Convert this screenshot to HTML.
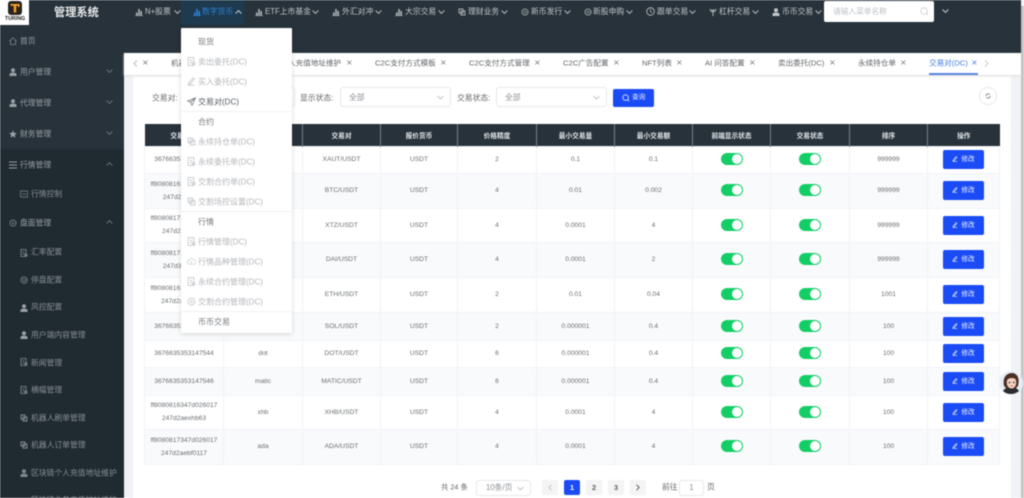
<!DOCTYPE html>
<html lang="zh"><head><meta charset="utf-8"><title>管理系统</title>
<style>
*{box-sizing:border-box;margin:0;padding:0}
html,body{width:1024px;height:498px;overflow:hidden;background:#fff}
body{font-family:"Liberation Sans","Noto Sans CJK SC",sans-serif;position:relative;color:#606266}
#w{position:absolute;inset:0;filter:blur(.4px);overflow:hidden}
.a{position:absolute;white-space:nowrap}
.l{transform:translateY(.6px)}
.n{position:absolute;top:7px;font-size:7.8px;line-height:10px;color:#c4c8cb;white-space:nowrap}
.nc{position:absolute;top:9px;width:7px;height:6px}
.ni{position:absolute;top:8px;width:8px;height:8px}
.s{position:absolute;font-size:7.8px;line-height:12px;color:#9aa0a4;white-space:nowrap;transform:translateY(.6px)}
.si{position:absolute;width:8px;height:8px}
.t{position:absolute;top:57px;font-size:7.6px;line-height:12px;color:#5f6468;white-space:nowrap;transform:translateY(.5px)}
.x{position:absolute;top:57px;font-size:8px;line-height:11px;color:#777;font-family:"DejaVu Sans",sans-serif}
.d{position:absolute;left:198px;font-size:8px;line-height:12px;color:#b4b6ba;white-space:nowrap;transform:translateY(.7px)}
.d.h{color:#777b80}.d.k{color:#555a60}
.di{position:absolute;left:187px;width:9px;height:9px}
.hr{position:absolute;left:181px;width:111px;height:1px;background:#f1f2f4}
table{position:absolute;left:144px;top:124px;width:855px;table-layout:fixed;border-collapse:collapse;font-size:6.7px;color:#6a6e73;text-align:center}
th{background:#27323a;color:#e4e7e9;font-weight:bold;height:22px;border-left:1px solid #77808a;font-size:6.7px}
th:first-child{border-left:0}
td{border:1px solid #f1f3f7;line-height:13px;padding:0}
tr.g td{background:#f9fafb}
.sw{display:inline-block;position:relative;width:22px;height:12px;border-radius:6px;background:#13ce66;vertical-align:middle}
.sw:after{content:"";position:absolute;right:1px;top:1px;width:10px;height:10px;border-radius:50%;background:#fff}
.b{display:inline-block;width:41px;height:19px;line-height:19px;background:#1a4bf5;border-radius:2px;color:#e8edff;font-size:6.7px;vertical-align:middle}
.b svg{width:6px;height:6px;margin-right:3px;vertical-align:-1px}
.sel{position:absolute;height:20px;background:#fff;border:1px solid #e6e8ec;border-radius:3px;font-size:7.8px;line-height:19px;color:#8a8e94;padding-left:8px}
.sel svg{position:absolute;right:6px;top:7px;width:7px;height:5px}
.p{position:absolute;top:480px;width:16px;height:15px;line-height:15px;text-align:center;font-size:7.4px;background:#f4f4f5;color:#606266;border-radius:2px;font-weight:bold}
.p svg{position:absolute;left:6px;top:4px}
</style></head><body><div id="w">
<svg width="0" height="0" style="position:absolute"><defs>
<symbol id="ch" viewBox="0 0 7 5"><path d="M.6 1 3.500 3.900 6.400 1" fill="none" stroke="currentColor"/></symbol>
<symbol id="up" viewBox="0 0 7 5"><path d="M.6 4 3.500 1.100 6.400 4" fill="none" stroke="currentColor"/></symbol>
<symbol id="bar" viewBox="0 0 8 8"><path d="M0 7.500h8V8H0zM1 4.500h1.600v3H1zM3.200 1h1.600v6.500H3.200zM5.400 3H7v4.500H5.400z" fill="currentColor"/></symbol>
<symbol id="gear" viewBox="0 0 8 8"><circle cx="4" cy="4" r="3" fill="none" stroke="currentColor" stroke-width="1.200" stroke-dasharray="1.200 .5"/><circle cx="4" cy="4" r="1" fill="none" stroke="currentColor" stroke-width=".6"/></symbol>
<symbol id="user" viewBox="0 0 8 8"><circle cx="4" cy="2.200" r="2" fill="currentColor"/><path d="M.5 8V6.200C.5 5 2 4.600 4 4.600s3.500.4 3.500 1.600V8z" fill="currentColor"/></symbol>
<symbol id="doc" viewBox="0 0 8 8"><path d="M1 .5h5v7H1zM2.500 3h2M2.500 5h2" fill="none" stroke="currentColor" stroke-width=".8"/><circle cx="6" cy="6" r="1.200" fill="none" stroke="currentColor" stroke-width=".7"/></symbol>
<symbol id="edit" viewBox="0 0 8 8"><path d="M1 7.300h6M1.500 5.500 5.500.8l1.200 1-4 4.700-1.500.3z" fill="none" stroke="currentColor" stroke-width=".8"/></symbol>
<symbol id="cop" viewBox="0 0 8 8"><path d="M1 1h4v4H1zM3 3h4v4H3z" fill="none" stroke="currentColor" stroke-width=".9"/></symbol>
</defs></svg>

<!-- base regions -->
<div class="a" style="left:0;top:0;width:1021px;height:53px;background:#27323a"></div>
<div class="a" style="left:0;top:53px;width:124px;height:445px;background:#27323a"></div>
<div class="a" style="left:0;top:149px;width:124px;height:349px;background:#1f2a31"></div>
<div class="a" style="left:124px;top:53px;width:897px;height:445px;background:#f0f2f5"></div>
<div class="a" style="left:133px;top:76px;width:878px;height:422px;background:#fff"></div>
<div class="a" style="left:124px;top:53px;width:897px;height:22px;background:#fff;box-shadow:0 1px 2px #ddd"></div>
<div class="a" style="left:1021px;top:0;width:3px;height:498px;background:#c4c4c4"></div>
<div class="a" style="left:1021px;top:0;width:3px;height:6px;background:#f1f1f1"></div>

<!-- logo -->
<div class="a" style="left:0;top:0;width:29px;height:25px;background:#fff"></div>
<div class="a" style="left:8px;top:1px;width:14px;height:14px;border-radius:3px;background:#2a2320"></div>
<svg class="a" style="left:9px;top:2px" width="12" height="12" viewBox="0 0 12 12"><path d="M1.500 2h9v3H9V3.800H7.200V10.500H4.800V3.800H1.500z" fill="#f5a623"/></svg>
<div class="a" style="left:2px;top:16px;width:26px;text-align:center;font-size:5.300px;line-height:7px;font-weight:bold;color:#222">TURING</div>
<div class="a" style="left:54px;top:6px;font-size:11.200px;line-height:14px;font-weight:bold;color:#e9ebec">管理系统</div>

<!-- top nav -->
<div class="a" style="left:181px;top:0;width:63px;height:25px;background:#1d3a4e"></div>
<svg class="ni" style="left:135px;color:#aeb3b6"><use href="#bar"/></svg><div class="n" style="left:145px">N+股票</div><svg class="nc" style="left:174px;color:#b5b9bc"><use href="#ch"/></svg>
<svg class="ni" style="left:193px;color:#2f80d6"><use href="#bar"/></svg><div class="n" style="left:202px;color:#2f80d6">数字货币</div><svg class="nc" style="left:235px;color:#c8ccd0"><use href="#up"/></svg>
<svg class="ni" style="left:255px;color:#aeb3b6"><use href="#bar"/></svg><div class="n" style="left:265px">ETF上市基金</div><svg class="nc" style="left:312px;color:#b5b9bc"><use href="#ch"/></svg>
<svg class="ni" style="left:332px;color:#aeb3b6"><use href="#bar"/></svg><div class="n" style="left:342px">外汇对冲</div><svg class="nc" style="left:375px;color:#b5b9bc"><use href="#ch"/></svg>
<svg class="ni" style="left:395px;color:#aeb3b6"><use href="#bar"/></svg><div class="n" style="left:405px">大宗交易</div><svg class="nc" style="left:438px;color:#b5b9bc"><use href="#ch"/></svg>
<svg class="ni" style="left:458px;color:#aeb3b6"><use href="#cop"/></svg><div class="n" style="left:468px">理财业务</div><svg class="nc" style="left:501px;color:#b5b9bc"><use href="#ch"/></svg>
<svg class="ni" style="left:521px;color:#aeb3b6"><use href="#gear"/></svg><div class="n" style="left:531px">新币发行</div><svg class="nc" style="left:564px;color:#b5b9bc"><use href="#ch"/></svg>
<svg class="ni" style="left:584px;color:#aeb3b6"><use href="#gear"/></svg><div class="n" style="left:593px">新股申购</div><svg class="nc" style="left:626px;color:#b5b9bc"><use href="#ch"/></svg>
<svg class="ni" style="left:646px;top:7px;width:9px;height:9px" viewBox="0 0 9 9"><circle cx="4.500" cy="4.500" r="3.800" fill="none" stroke="#c0c4c7" stroke-width=".8"/><path d="M4.500 2v2.700l1.600 1" fill="none" stroke="#c0c4c7" stroke-width=".7"/></svg><div class="n" style="left:657px">跟单交易</div><svg class="nc" style="left:689px;color:#b5b9bc"><use href="#ch"/></svg>
<svg class="ni" style="left:709px;color:#aeb3b6" viewBox="0 0 8 8"><path d="M.5 1.500c2 1 5 1 7 0M1.500 3.500h5M4 1.500V8" fill="none" stroke="currentColor" stroke-width="1"/></svg><div class="n" style="left:719px">杠杆交易</div><svg class="nc" style="left:752px;color:#b5b9bc"><use href="#ch"/></svg>
<svg class="ni" style="left:772px;color:#c4c8cb"><use href="#user"/></svg><div class="n" style="left:782px">币币交易</div><svg class="nc" style="left:815px;color:#b5b9bc"><use href="#ch"/></svg>
<div class="a" style="left:824px;top:1px;width:110px;height:21px;background:#fff;border-radius:2px"></div>
<div class="a" style="left:833px;top:6px;font-size:7.700px;line-height:11px;color:#bcc0c5">请输入菜单名称</div>
<svg class="a" style="left:920px;top:7px" width="9" height="9" viewBox="0 0 9 9"><circle cx="4" cy="4" r="3.200" fill="none" stroke="#ccc" stroke-width=".8"/><path d="M6.300 6.300 8 8" stroke="#ccc" stroke-width=".8"/></svg>
<svg class="nc" style="left:942px;top:8px;color:#c5c9cc"><use href="#ch"/></svg>

<!-- sidebar -->
<svg class="si" style="left:9px;top:37px;color:#7f878c" viewBox="0 0 8 8"><path d="M.5 4 4 .8 7.500 4M1.500 3.500V7.500h5V3.500" fill="none" stroke="currentColor" stroke-width=".8"/></svg><div class="s" style="left:20px;top:35px">首页</div>
<svg class="si" style="left:9px;top:68px;color:#9aa0a4"><use href="#user"/></svg><div class="s" style="left:20px;top:66px">用户管理</div><svg class="nc" style="left:106px;top:68px;color:#667076"><use href="#ch"/></svg>
<svg class="si" style="left:9px;top:99px;color:#9aa0a4"><use href="#user"/></svg><div class="s" style="left:20px;top:97px">代理管理</div><svg class="nc" style="left:106px;top:99px;color:#667076"><use href="#ch"/></svg>
<svg class="si" style="left:9px;top:130px;color:#9aa0a4" viewBox="0 0 8 8"><path d="M4 .3 5.100 2.900 7.800 3.100 5.800 5 6.400 7.700 4 6.300 1.600 7.700 2.200 5 .2 3.100 2.900 2.900z" fill="currentColor"/></svg><div class="s" style="left:20px;top:128px">财务管理</div><svg class="nc" style="left:106px;top:130px;color:#667076"><use href="#ch"/></svg>
<svg class="si" style="left:9px;top:161px;color:#9aa0a4" viewBox="0 0 8 8"><path d="M0 1h8M0 4h8M0 7h8" stroke="currentColor"/></svg><div class="s" style="left:20px;top:159px">行情管理</div><svg class="nc" style="left:106px;top:161px;color:#667076"><use href="#up"/></svg>
<svg class="si" style="left:20px;top:190px;color:#7f878c" viewBox="0 0 8 8"><path d="M.5 1h7v6h-7zM2 4h4" fill="none" stroke="currentColor" stroke-width=".7"/></svg><div class="s" style="left:31px;top:188px;color:#8a9095">行情控制</div>
<svg class="si" style="left:9px;top:219px;color:#7f878c"><use href="#gear"/></svg><div class="s" style="left:20px;top:217px">盘面管理</div><svg class="nc" style="left:106px;top:219px;color:#667076"><use href="#up"/></svg>
<svg class="si" style="left:20px;top:249px;color:#8a9095"><use href="#doc"/></svg><div class="s" style="left:31px;top:246px;color:#8a9095">汇率配置</div>
<svg class="si" style="left:20px;top:276px;color:#8a9095"><use href="#gear"/></svg><div class="s" style="left:31px;top:274px;color:#8a9095">停盘配置</div>
<svg class="si" style="left:20px;top:304px;color:#9aa0a4"><use href="#user"/></svg><div class="s" style="left:31px;top:301px;color:#8a9095">风控配置</div>
<svg class="si" style="left:20px;top:331px;color:#9aa0a4"><use href="#user"/></svg><div class="s" style="left:31px;top:329px;color:#8a9095">用户端内容管理</div>
<svg class="si" style="left:20px;top:358px;color:#8a9095"><use href="#doc"/></svg><div class="s" style="left:31px;top:357px;color:#8a9095">新闻管理</div>
<svg class="si" style="left:20px;top:386px;color:#8a9095"><use href="#doc"/></svg><div class="s" style="left:31px;top:384px;color:#8a9095">横幅管理</div>
<svg class="si" style="left:20px;top:414px;color:#8a9095"><use href="#cop"/></svg><div class="s" style="left:31px;top:412px;color:#8a9095">机器人刷单管理</div>
<svg class="si" style="left:20px;top:441px;color:#8a9095"><use href="#cop"/></svg><div class="s" style="left:31px;top:439px;color:#8a9095">机器人订单管理</div>
<svg class="si" style="left:20px;top:469px;color:#7f878c"><use href="#user"/></svg><div class="s" style="left:31px;top:467px;color:#8a9095">区块链个人充值地址维护</div>
<div class="s" style="left:31px;top:494px;color:#8a9095">区块链业务充值地址维护</div>

<!-- tabs -->
<svg class="a" style="left:133px;top:60px;color:#aaa" width="5" height="7" viewBox="0 0 5 7"><path d="M4 .5 1 3.500 4 6.500" fill="none" stroke="currentColor" stroke-width=".8"/></svg>
<div class="x" style="left:142px">×</div>
<div class="t" style="left:171px">机器人充值</div>
<div class="t" style="left:288px">人充值地址维护</div><div class="x" style="left:346px">×</div>
<div class="t" style="left:375px">C2C支付方式模板</div><div class="x" style="left:440px">×</div>
<div class="t" style="left:469px">C2C支付方式管理</div><div class="x" style="left:534px">×</div>
<div class="t" style="left:563px">C2C广告配置</div><div class="x" style="left:613px">×</div>
<div class="t" style="left:642px">NFT列表</div><div class="x" style="left:676px">×</div>
<div class="t" style="left:705px">AI 问答配置</div><div class="x" style="left:749px">×</div>
<div class="t" style="left:778px">卖出委托(DC)</div><div class="x" style="left:829px">×</div>
<div class="t" style="left:858px">永续持仓单</div><div class="x" style="left:900px">×</div>
<div class="t" style="left:929px;color:#3f7be0">交易对(DC)</div><div class="x" style="left:971px;color:#3f7be0">×</div>
<div class="a" style="left:929px;top:73px;width:49px;height:2px;background:#5a85e0"></div>
<svg class="a" style="left:984px;top:60px;color:#bbb" width="5" height="7" viewBox="0 0 5 7"><path d="M1 .5 4 3.500 1 6.500" fill="none" stroke="currentColor" stroke-width=".8"/></svg>

<!-- filters -->
<div class="a l" style="left:152px;top:92px;font-size:7.800px;line-height:12px;color:#666">交易对:</div>
<div class="sel" style="left:181px;top:87px;width:114px"></div>
<div class="a l" style="left:300px;top:92px;font-size:7.800px;line-height:12px;color:#666">显示状态:</div>
<div class="sel" style="left:340px;top:87px;width:111px">全部<svg style="color:#c0c4cc"><use href="#ch"/></svg></div>
<div class="a l" style="left:457px;top:92px;font-size:7.800px;line-height:12px;color:#666">交易状态:</div>
<div class="sel" style="left:496px;top:87px;width:111px">全部<svg style="color:#c0c4cc"><use href="#ch"/></svg></div>
<div class="a" style="left:613px;top:89px;width:41px;height:18px;background:#1a4bf5;border-radius:2px;color:#e8edff;font-size:6.700px;line-height:18px;padding-left:19px">查询</div>
<svg class="a" style="left:622px;top:94px" width="8" height="8" viewBox="0 0 8 8"><circle cx="3.600" cy="3.600" r="2.800" fill="none" stroke="#e8edff" stroke-width=".8"/><path d="M5.600 5.600 7.300 7.300" stroke="#e8edff" stroke-width=".8"/></svg>
<div class="a" style="left:979px;top:87px;width:18px;height:18px;border:1px solid #e6e8ec;border-radius:50%"></div>
<svg class="a" style="left:985px;top:93px" width="6" height="6" viewBox="0 0 6 6"><path d="M.8 3a2.200 2.200 0 0 1 4-1.200M5.200 3a2.200 2.200 0 0 1-4 1.200" fill="none" stroke="#777" stroke-width=".8"/></svg>

<!-- table -->
<table>
<colgroup><col style="width:79px"><col style="width:79px"><col style="width:78px"><col style="width:77px"><col style="width:79px"><col style="width:78px"><col style="width:78px"><col style="width:78px"><col style="width:79px"><col style="width:78px"><col style="width:72px"></colgroup>
<tr><th>交易对ID</th><th>币种</th><th>交易对</th><th>报价货币</th><th>价格精度</th><th>最小交易量</th><th>最小交易额</th><th>前端显示状态</th><th>交易状态</th><th>排序</th><th>操作</th></tr>
<tr style="height:27px"><td>3676635353147541</td><td>xaut</td><td>XAUT/USDT</td><td>USDT</td><td>2</td><td>0.1</td><td>0.1</td><td><i class="sw"></i></td><td><i class="sw"></i></td><td>999999</td><td><span class="b"><svg><use href="#edit"/></svg>修改</span></td></tr>
<tr class="g" style="height:35px"><td>ff8080816347d026017<br>247d2aebtc01</td><td>btc</td><td>BTC/USDT</td><td>USDT</td><td>4</td><td>0.01</td><td>0.002</td><td><i class="sw"></i></td><td><i class="sw"></i></td><td>999999</td><td><span class="b"><svg><use href="#edit"/></svg>修改</span></td></tr>
<tr style="height:34px"><td>ff8080817347d026017<br>247d2aexz012</td><td>xtz</td><td>XTZ/USDT</td><td>USDT</td><td>4</td><td>0.0001</td><td>4</td><td><i class="sw"></i></td><td><i class="sw"></i></td><td>999999</td><td><span class="b"><svg><use href="#edit"/></svg>修改</span></td></tr>
<tr class="g" style="height:35px"><td>ff8080817347d026017<br>247d3adai013</td><td>dai</td><td>DAI/USDT</td><td>USDT</td><td>4</td><td>0.0001</td><td>2</td><td><i class="sw"></i></td><td><i class="sw"></i></td><td>999999</td><td><span class="b"><svg><use href="#edit"/></svg>修改</span></td></tr>
<tr style="height:35px"><td>ff8080816347d026017<br>247d2aeth0117</td><td>eth</td><td>ETH/USDT</td><td>USDT</td><td>2</td><td>0.01</td><td>0.04</td><td><i class="sw"></i></td><td><i class="sw"></i></td><td>1001</td><td><span class="b"><svg><use href="#edit"/></svg>修改</span></td></tr>
<tr class="g" style="height:28px"><td>3676635353147543</td><td>sol</td><td>SOL/USDT</td><td>USDT</td><td>2</td><td>0.000001</td><td>0.4</td><td><i class="sw"></i></td><td><i class="sw"></i></td><td>100</td><td><span class="b"><svg><use href="#edit"/></svg>修改</span></td></tr>
<tr style="height:27px"><td>3676635353147544</td><td>dot</td><td>DOT/USDT</td><td>USDT</td><td>6</td><td>0.000001</td><td>0.4</td><td><i class="sw"></i></td><td><i class="sw"></i></td><td>100</td><td><span class="b"><svg><use href="#edit"/></svg>修改</span></td></tr>
<tr class="g" style="height:28px"><td>3676635353147546</td><td>matic</td><td>MATIC/USDT</td><td>USDT</td><td>6</td><td>0.000001</td><td>0.4</td><td><i class="sw"></i></td><td><i class="sw"></i></td><td>100</td><td><span class="b"><svg><use href="#edit"/></svg>修改</span></td></tr>
<tr style="height:34px"><td>ff8080816347d026017<br>247d2aexhb63</td><td>xhb</td><td>XHB/USDT</td><td>USDT</td><td>4</td><td>0.0001</td><td>4</td><td><i class="sw"></i></td><td><i class="sw"></i></td><td>100</td><td><span class="b"><svg><use href="#edit"/></svg>修改</span></td></tr>
<tr class="g" style="height:35px"><td>ff8080817347d026017<br>247d2aebf0117</td><td>ada</td><td>ADA/USDT</td><td>USDT</td><td>4</td><td>0.0001</td><td>4</td><td><i class="sw"></i></td><td><i class="sw"></i></td><td>100</td><td><span class="b"><svg><use href="#edit"/></svg>修改</span></td></tr>
</table>

<!-- dropdown -->
<div class="a" style="left:181px;top:28px;width:111px;height:305px;background:#fff;box-shadow:0 1px 5px rgba(0,0,0,.16);border-radius:1px"></div>
<div class="hr" style="top:111px"></div><div class="hr" style="top:211px"></div><div class="hr" style="top:311px"></div>
<div class="d h" style="top:36px">现货</div>
<svg class="di" style="top:57px;color:#c6c8cc"><use href="#doc"/></svg><div class="d" style="top:56px">卖出委托(DC)</div>
<svg class="di" style="top:77px;color:#c6c8cc"><use href="#edit"/></svg><div class="d" style="top:76px">买入委托(DC)</div>
<svg class="di" style="top:97px;color:#666a70" viewBox="0 0 9 9"><path d="M8.500.8.500 4l3 1.200L5 8.300z M3.500 5.200 8.500.8" fill="none" stroke="currentColor" stroke-width=".7"/></svg><div class="d k" style="top:96px">交易对(DC)</div>
<div class="d h" style="top:116px">合约</div>
<svg class="di" style="top:137px;color:#c6c8cc"><use href="#cop"/></svg><div class="d" style="top:136px">永续持仓单(DC)</div>
<svg class="di" style="top:157px;color:#c6c8cc"><use href="#doc"/></svg><div class="d" style="top:156px">永续委托单(DC)</div>
<svg class="di" style="top:177px;color:#c6c8cc"><use href="#doc"/></svg><div class="d" style="top:176px">交割合约单(DC)</div>
<svg class="di" style="top:197px;color:#c6c8cc"><use href="#cop"/></svg><div class="d" style="top:196px">交割场控设置(DC)</div>
<div class="d h" style="top:216px">行情</div>
<svg class="di" style="top:237px;color:#c6c8cc"><use href="#doc"/></svg><div class="d" style="top:236px">行情管理(DC)</div>
<svg class="di" style="top:257px;color:#c6c8cc" viewBox="0 0 9 9"><path d="M2.300 7.200a2 2 0 0 1 0-4 2.500 2.500 0 0 1 4.700 0 2 2 0 0 1 0 4zM4.500 4v2.500" fill="none" stroke="currentColor" stroke-width=".7"/></svg><div class="d" style="top:256px">行情品种管理(DC)</div>
<svg class="di" style="top:277px;color:#c6c8cc"><use href="#doc"/></svg><div class="d" style="top:276px">永续合约管理(DC)</div>
<svg class="di" style="top:297px;color:#c6c8cc"><use href="#gear"/></svg><div class="d" style="top:296px">交割合约管理(DC)</div>
<div class="d h" style="top:316px">币币交易</div>

<!-- pagination -->
<div class="a l" style="left:441px;top:481px;font-size:7.300px;line-height:12px;color:#666">共 24 条</div>
<div class="sel" style="left:476px;top:480px;width:55px;height:16px;line-height:14px;padding-left:9px">10条/页<svg style="top:5px;color:#c0c4cc"><use href="#ch"/></svg></div>
<div class="p" style="left:542px"><svg width="4" height="7" viewBox="0 0 4 7" style="color:#c0c4cc"><path d="M3.500.8.800 3.500 3.500 6.200" fill="none" stroke="currentColor" stroke-width=".9"/></svg></div>
<div class="p" style="left:564px;background:#1a4bf5;color:#fff">1</div>
<div class="p" style="left:586px">2</div>
<div class="p" style="left:608px">3</div>
<div class="p" style="left:630px"><svg width="4" height="7" viewBox="0 0 4 7" style="color:#555"><path d="M.5.8 3.200 3.500.5 6.200" fill="none" stroke="currentColor" stroke-width=".9"/></svg></div>
<div class="a l" style="left:662px;top:481px;font-size:7.800px;line-height:12px;color:#666">前往</div>
<div class="sel" style="left:679px;top:480px;width:25px;height:16px;line-height:14px;padding:0;text-align:center">1</div>
<div class="a l" style="left:707px;top:481px;font-size:7.800px;line-height:12px;color:#666">页</div>

<!-- avatar -->
<svg class="a" style="left:999px;top:371px" width="24" height="24" viewBox="0 0 24 24">
<circle cx="12" cy="12" r="12" fill="#e8eef7"/>
<path d="M4 20c2-3 5-4 8-4s6 1 8 4a12 12 0 0 1-16 0z" fill="#2b2b30"/>
<path d="M5 15C3 5 9 2 13 2c5 0 8 5 6 13l-2 2H7z" fill="#4a2e22"/>
<ellipse cx="12.500" cy="11.500" rx="4.800" ry="6" fill="#f3cfc0"/>
<path d="M7 10c2-3 6-4 10-2-2-4-9-4-10 2z" fill="#4a2e22"/>
<circle cx="10.500" cy="11.500" r=".8" fill="#222"/><circle cx="14.800" cy="11.500" r=".8" fill="#222"/>
<path d="M11.500 15h2.200" stroke="#c0554f" stroke-width=".7"/>
</svg>
</div></body></html>
